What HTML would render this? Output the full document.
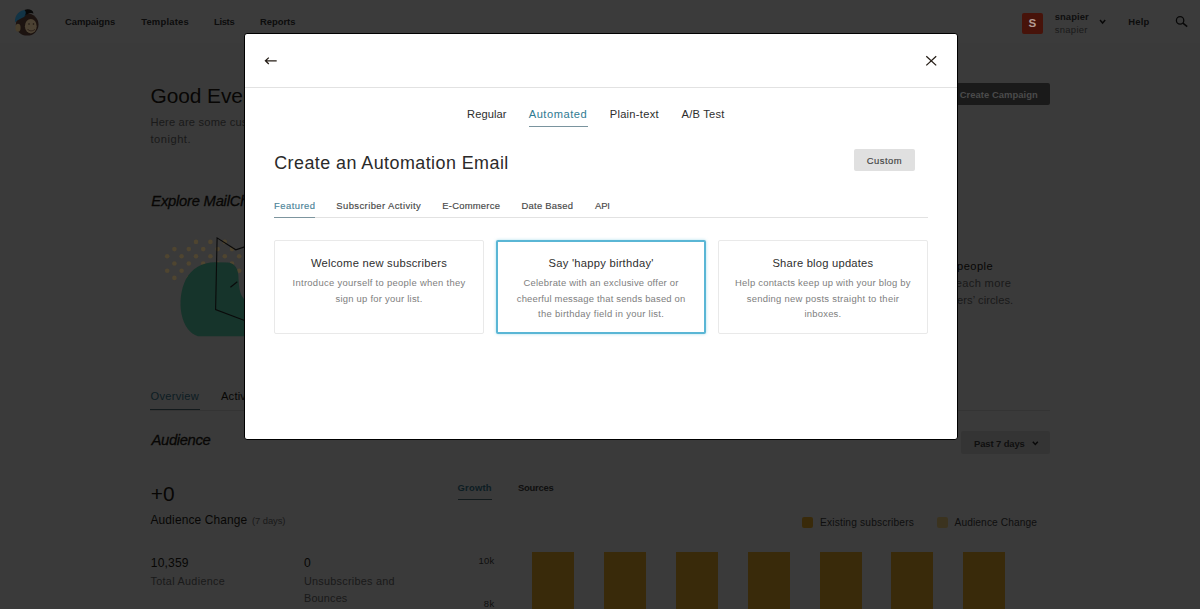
<!DOCTYPE html>
<html lang="en">
<head>
<meta charset="utf-8">
<title>MailChimp Dashboard</title>
<style>
html,body{margin:0;padding:0;}
body{width:1200px;height:609px;overflow:hidden;position:relative;background:#fff;font-family:"Liberation Sans",sans-serif;color:#241c15;}
.a{position:absolute;}
.t{position:absolute;white-space:nowrap;line-height:1;}
.sb{font-weight:bold;}
.i{font-style:italic;-webkit-text-stroke:0.3px currentColor;}
.md{-webkit-text-stroke:0.15px currentColor;}
.layer{position:absolute;left:0;top:0;width:1200px;height:609px;overflow:hidden;}
#page{background:#fafafa;}
#nav{position:absolute;left:0;top:0;width:1200px;height:43px;background:#fff;}
.bar{position:absolute;top:552px;width:42px;height:60px;background:#f7b72b;}
#overlay{background:rgba(0,0,0,0.768);}
#mbox{position:absolute;left:244px;top:33px;width:712px;height:405px;background:#fff;border:1px solid #000;border-radius:3px;}
.card{position:absolute;box-sizing:border-box;top:240.2px;height:93.5px;width:209.6px;border:1px solid #e9e9e9;border-radius:2px;background:#fff;}
.card.sel{border:2px solid #5ab6d5;box-shadow:0 0 3px rgba(82,186,213,.5);}
</style>
</head>
<body>
<div id="page" class="layer">
  <div id="nav"></div>
  <svg class="a" style="left:1098px;top:17px" width="10" height="9" viewBox="0 0 10 9"><path d="M2 3 L4.6 6 L7.2 3" fill="none" stroke="#222" stroke-width="1.5"/></svg>
  <svg class="a" style="left:1172px;top:12px" width="20" height="18" viewBox="0 0 20 18"><circle cx="8.1" cy="8.4" r="3.7" fill="none" stroke="#222" stroke-width="1.3"/><path d="M10.9 11.2 L15.2 14.7" stroke="#222" stroke-width="1.6"/></svg>
  <div class="a" style="left:946.7px;top:83px;width:103.3px;height:22.4px;background:#737373;border-radius:2px;"></div>
  <div class="a" style="left:150px;top:410px;width:899.5px;height:1px;background:#e0e0e0;"></div>
  <div class="a" style="left:150px;top:408.8px;width:50px;height:1.3px;background:#55707a;"></div>
  <div class="a" style="left:961px;top:431.4px;width:89px;height:22.9px;background:#e0e0e0;border-radius:2px;"></div>
  <svg class="a" style="left:1030px;top:438px" width="11" height="10" viewBox="0 0 11 10"><path d="M2.8 3.8 L5.3 6.5 L7.8 3.8" fill="none" stroke="#222" stroke-width="1.5"/></svg>
  <div class="a" style="left:457.5px;top:498.7px;width:34.2px;height:1.3px;background:#55707a;"></div>
  <div class="a" style="left:802.2px;top:516.6px;width:11px;height:11px;background:#f7b72b;border-radius:2px;"></div>
  <div class="a" style="left:936.6px;top:516.6px;width:11px;height:11px;background:#ffdd88;border-radius:2px;"></div>
  <div class="bar" style="left:532.4px"></div><div class="bar" style="left:604.2px"></div><div class="bar" style="left:675.9px"></div><div class="bar" style="left:747.7px"></div><div class="bar" style="left:819.5px"></div><div class="bar" style="left:891.2px"></div><div class="bar" style="left:963.0px"></div>
  <div class="t sb" style="left:65.00px;top:17.30px;font-size:9.43px;color:#3a3a3a;letter-spacing:-0.076px;">Campaigns</div>
  <div class="t sb" style="left:141.20px;top:17.30px;font-size:9.43px;color:#3a3a3a;letter-spacing:0.193px;">Templates</div>
  <div class="t sb" style="left:214.00px;top:17.30px;font-size:9.43px;color:#3a3a3a;letter-spacing:-0.336px;">Lists</div>
  <div class="t sb" style="left:260.00px;top:17.30px;font-size:9.43px;color:#3a3a3a;letter-spacing:-0.026px;">Reports</div>
  <div class="t sb" style="left:1128.20px;top:17.30px;font-size:9.43px;color:#3a3a3a;letter-spacing:0.198px;">Help</div>
  <div class="t sb" style="left:1054.70px;top:12.40px;font-size:9.43px;color:#444;letter-spacing:0.086px;">snapier</div>
  <div class="t" style="left:1054.70px;top:24.70px;font-size:9.43px;color:#777;letter-spacing:0.315px;">snapier</div>
  <div class="t" style="left:150.60px;top:85.80px;font-size:20.9px;letter-spacing:-0.085px;">Good Evening, Snapier!</div>
  <div class="t" style="left:150.50px;top:117.40px;font-size:11.14px;color:#737373;letter-spacing:0.182px;">Here are some custom stats for your account</div>
  <div class="t" style="left:150.50px;top:133.90px;font-size:11.14px;color:#737373;letter-spacing:0.507px;">tonight.</div>
  <div class="t i" style="left:151.30px;top:194.00px;font-size:14.75px;letter-spacing:-0.229px;">Explore MailChimp</div>
  <div class="t" style="left:957.00px;top:260.50px;font-size:11.14px;letter-spacing:0.438px;">people</div>
  <div class="t" style="left:955.70px;top:278.00px;font-size:11.14px;color:#737373;letter-spacing:0.338px;">each more</div>
  <div class="t" style="left:957.00px;top:295.30px;font-size:11.14px;color:#737373;letter-spacing:0.079px;">ers’ circles.</div>
  <div class="t" style="left:150.50px;top:391.30px;font-size:11.14px;color:#3b8198;letter-spacing:0.268px;">Overview</div>
  <div class="t" style="left:221.00px;top:391.30px;font-size:11.14px;letter-spacing:0.198px;">Activity</div>
  <div class="t i" style="left:151.50px;top:433.00px;font-size:14.85px;letter-spacing:-0.377px;">Audience</div>
  <div class="t sb" style="left:974.00px;top:439.00px;font-size:9.43px;color:#444;letter-spacing:-0.103px;">Past 7 days</div>
  <div class="t" style="left:150.80px;top:483.70px;font-size:20.9px;letter-spacing:0.062px;">+0</div>
  <div class="t" style="left:150.50px;top:514.80px;font-size:11.95px;letter-spacing:0.128px;">Audience Change</div>
  <div class="t" style="left:252.00px;top:515.80px;font-size:9.4px;color:#737373;letter-spacing:-0.062px;">(7 days)</div>
  <div class="t" style="left:150.80px;top:557.00px;font-size:12.1px;letter-spacing:0.144px;">10,359</div>
  <div class="t" style="left:150.50px;top:576.00px;font-size:10.75px;color:#737373;letter-spacing:0.328px;">Total Audience</div>
  <div class="t" style="left:304.00px;top:557.00px;font-size:12.1px;letter-spacing:0.188px;">0</div>
  <div class="t" style="left:304.00px;top:576.00px;font-size:10.85px;color:#737373;letter-spacing:0.250px;">Unsubscribes and</div>
  <div class="t" style="left:304.00px;top:593.40px;font-size:10.85px;color:#737373;letter-spacing:0.180px;">Bounces</div>
  <div class="t sb" style="left:457.50px;top:483.00px;font-size:9.43px;color:#3b8198;letter-spacing:0.216px;">Growth</div>
  <div class="t sb" style="left:518.00px;top:483.00px;font-size:9.43px;color:#444;letter-spacing:-0.250px;">Sources</div>
  <div class="t" style="left:820.00px;top:518.30px;font-size:10.2px;color:#444;letter-spacing:0.170px;">Existing subscribers</div>
  <div class="t" style="left:954.50px;top:518.30px;font-size:10.2px;color:#444;letter-spacing:0.110px;">Audience Change</div>
  <div class="t" style="left:478.47px;top:556.30px;font-size:9.43px;color:#444;letter-spacing:0.266px;">10k</div>
  <div class="t" style="left:483.86px;top:599.30px;font-size:9.43px;color:#444;letter-spacing:0.391px;">8k</div>
</div>
<div id="overlay" class="layer"></div>
<div id="post" class="layer">
  <svg class="a" style="left:0;top:0" width="60" height="44" viewBox="0 0 60 44">
    <ellipse cx="27.2" cy="24.6" rx="11.3" ry="11" fill="#1c1310"/>
    <path d="M15 22.5 C14.5 15 19 10.5 25.5 10 C28 12 27 15 24 17 C20.5 18.5 17.5 20 15 22.5 Z" fill="#123446"/>
    <path d="M24.5 10 C28 8.5 33 9.5 33.5 13.5 C31 12.5 27.5 12.8 24 17 C26 14 26.5 12 24.5 10 Z" fill="#080808"/>
    <ellipse cx="30.8" cy="26.2" rx="5.9" ry="7.3" fill="#4c4233"/>
    <ellipse cx="18" cy="27.7" rx="2.6" ry="4" fill="#483e2c"/>
    <path d="M27.5 29 C29 31.5 33 31.5 35 29.2" fill="none" stroke="#2a1e18" stroke-width="0.9"/>
    <circle cx="29" cy="24" r="0.8" fill="#1c1310"/><circle cx="33.5" cy="24" r="0.8" fill="#1c1310"/>
  </svg>
  <svg class="a" style="left:0;top:0" width="246" height="400" viewBox="0 0 246 400">
    <g fill="#4f4530"><circle cx="196.0" cy="241.9" r="2.3"/><circle cx="210.4" cy="241.9" r="2.3"/><circle cx="224.8" cy="241.9" r="2.3"/><circle cx="174.4" cy="249.1" r="2.3"/><circle cx="188.8" cy="249.1" r="2.3"/><circle cx="203.2" cy="249.1" r="2.3"/><circle cx="217.6" cy="249.1" r="2.3"/><circle cx="232.0" cy="249.1" r="2.3"/><circle cx="167.2" cy="256.3" r="2.3"/><circle cx="181.6" cy="256.3" r="2.3"/><circle cx="196.0" cy="256.3" r="2.3"/><circle cx="210.4" cy="256.3" r="2.3"/><circle cx="224.8" cy="256.3" r="2.3"/><circle cx="239.2" cy="256.3" r="2.3"/><circle cx="174.4" cy="263.5" r="2.3"/><circle cx="188.8" cy="263.5" r="2.3"/><circle cx="203.2" cy="263.5" r="2.3"/><circle cx="217.6" cy="263.5" r="2.3"/><circle cx="232.0" cy="263.5" r="2.3"/><circle cx="167.2" cy="270.7" r="2.3"/><circle cx="181.6" cy="270.7" r="2.3"/><circle cx="196.0" cy="270.7" r="2.3"/><circle cx="210.4" cy="270.7" r="2.3"/><circle cx="224.8" cy="270.7" r="2.3"/><circle cx="239.2" cy="270.7" r="2.3"/><circle cx="174.4" cy="277.9" r="2.3"/><circle cx="188.8" cy="277.9" r="2.3"/><circle cx="203.2" cy="277.9" r="2.3"/><circle cx="217.6" cy="277.9" r="2.3"/><circle cx="232.0" cy="277.9" r="2.3"/></g>
    <path d="M246 336.2 L198 336.2 C190 334 184 326 181.5 314 C179.5 303 180.5 290 186 279 C192 268.5 202 262.3 215 262.3 L227 262.5 C234 263 237.5 267 238.3 275 C239 285 238.5 295 246 301 Z" fill="#16342b"/>
    <path d="M246 246.3 L235.8 249.8 L217.1 237.9 L215.6 309.6 L246 321" fill="none" stroke="#0a0a0a" stroke-width="1.1" stroke-linejoin="miter"/>
    <path d="M230.4 287.2 L237.3 281.8" fill="none" stroke="#0a0a0a" stroke-width="1.1"/>
  </svg>
  <div class="a" style="left:1022px;top:12.7px;width:21px;height:21px;background:#47130a;border-radius:2px;"></div>
  <div class="t sb" style="left:959.70px;top:89.70px;font-size:9.43px;color:#4b4b4b;letter-spacing:0.046px;">Create Campaign</div>
  <div class="t sb" style="left:1028.51px;top:17.40px;font-size:11.6px;color:#b39c94;letter-spacing:-1.359px;">S</div>
</div>
<div id="modal" class="layer">
  <div id="mbox"></div>
  <svg class="a" style="left:262px;top:54px" width="18" height="14" viewBox="0 0 18 14"><path d="M14.7 6.8 H3.6 M6.8 3.6 L3.4 6.8 L6.8 10" fill="none" stroke="#241c15" stroke-width="1.25"/></svg>
  <svg class="a" style="left:924px;top:54px" width="15" height="14" viewBox="0 0 15 14"><path d="M2.3 2.2 L12.2 11.4 M12.2 2.2 L2.3 11.4" fill="none" stroke="#241c15" stroke-width="1.25"/></svg>
  <div class="a" style="left:245px;top:87px;width:712px;height:1px;background:#e2e2e2;"></div>
  <div class="a" style="left:528.7px;top:126px;width:59.3px;height:1px;background:#7a949e;"></div>
  <div class="a" style="left:853.6px;top:148.8px;width:61.5px;height:22.6px;background:#e0e0e0;border-radius:2px;"></div>
  <div class="a" style="left:274px;top:217px;width:653.7px;height:1px;background:#e2e2e2;"></div>
  <div class="a" style="left:274px;top:216.7px;width:41px;height:1.4px;background:#7d959e;"></div>
  <div class="card" style="left:274px"></div>
  <div class="card sel" style="left:496px;width:210px;top:240px;height:94px"></div>
  <div class="card" style="left:718.1px"></div>
  <div class="t" style="left:467.00px;top:109.00px;font-size:11.14px;color:#2e2e2e;letter-spacing:0.091px;">Regular</div>
  <div class="t" style="left:528.70px;top:109.00px;font-size:11.14px;color:#2f7b92;letter-spacing:0.525px;">Automated</div>
  <div class="t" style="left:609.70px;top:109.00px;font-size:11.14px;color:#2e2e2e;letter-spacing:0.281px;">Plain-text</div>
  <div class="t" style="left:681.50px;top:109.00px;font-size:11.14px;color:#2e2e2e;letter-spacing:0.230px;">A/B Test</div>
  <div class="t" style="left:274.20px;top:155.00px;font-size:17.92px;color:#2a2a2a;letter-spacing:0.446px;">Create an Automation Email</div>
  <div class="t md" style="left:866.69px;top:155.80px;font-size:9.43px;color:#444;letter-spacing:0.509px;">Custom</div>
  <div class="t md" style="left:274.00px;top:201.00px;font-size:9.43px;color:#4b8398;letter-spacing:0.469px;">Featured</div>
  <div class="t md" style="left:336.30px;top:201.00px;font-size:9.43px;color:#484848;letter-spacing:0.418px;">Subscriber Activity</div>
  <div class="t md" style="left:442.30px;top:201.00px;font-size:9.43px;color:#484848;letter-spacing:0.234px;">E-Commerce</div>
  <div class="t md" style="left:521.50px;top:201.00px;font-size:9.43px;color:#484848;letter-spacing:0.253px;">Date Based</div>
  <div class="t md" style="left:595.00px;top:201.00px;font-size:9.43px;color:#484848;letter-spacing:-0.141px;">API</div>
  <div class="t" style="left:310.92px;top:258.00px;font-size:11.2px;color:#2e2e2e;letter-spacing:0.254px;">Welcome new subscribers</div>
  <div class="t" style="left:292.55px;top:278.20px;font-size:9.43px;color:#7e7e7e;letter-spacing:0.293px;">Introduce yourself to people when they</div>
  <div class="t" style="left:335.45px;top:293.50px;font-size:9.43px;color:#7e7e7e;letter-spacing:0.247px;">sign up for your list.</div>
  <div class="t" style="left:548.59px;top:258.00px;font-size:11.2px;color:#2e2e2e;letter-spacing:0.250px;">Say 'happy birthday'</div>
  <div class="t" style="left:523.55px;top:278.20px;font-size:9.43px;color:#7e7e7e;letter-spacing:0.225px;">Celebrate with an exclusive offer or</div>
  <div class="t" style="left:516.77px;top:293.50px;font-size:9.43px;color:#7e7e7e;letter-spacing:0.189px;">cheerful message that sends based on</div>
  <div class="t" style="left:538.12px;top:309.00px;font-size:9.43px;color:#7e7e7e;letter-spacing:0.289px;">the birthday field in your list.</div>
  <div class="t" style="left:772.43px;top:258.00px;font-size:11.2px;color:#2e2e2e;letter-spacing:0.217px;">Share blog updates</div>
  <div class="t" style="left:735.04px;top:278.20px;font-size:9.43px;color:#7e7e7e;letter-spacing:0.236px;">Help contacts keep up with your blog by</div>
  <div class="t" style="left:746.68px;top:293.50px;font-size:9.43px;color:#7e7e7e;letter-spacing:0.272px;">sending new posts straight to their</div>
  <div class="t" style="left:804.41px;top:309.00px;font-size:9.43px;color:#7e7e7e;letter-spacing:0.241px;">inboxes.</div>
</div>
</body>
</html>
